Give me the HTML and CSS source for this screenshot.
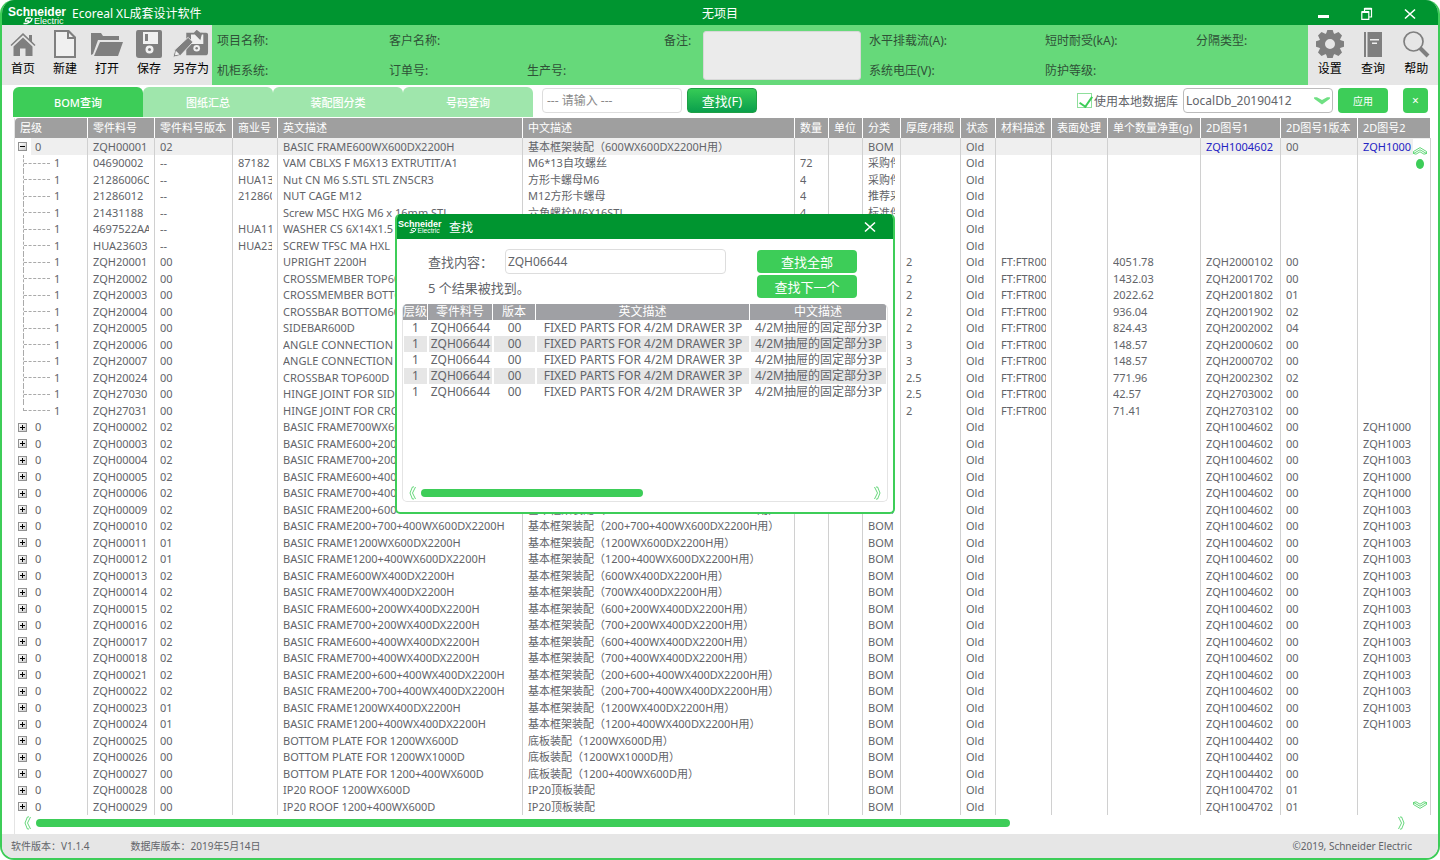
FILE: index.html
```html
<!DOCTYPE html>
<html lang="zh-CN">

<head>
    <meta charset="UTF-8">
    <meta name="viewport" content="width=device-width, initial-scale=1.0">
    <title>Ecoreal XL成套设计软件</title>
    <link rel="stylesheet" href="styles.css">
</head>

<body>

    <!-- shared arrows of the scroll bars -->
    <svg class="sprite" aria-hidden="true">
        <symbol id="arrow" viewBox="0 0 14 8">
            <path d="M.5 1.500 L3 .8 L7 3.200 L11 .8 L13.500 1.500 L7 5.200 Z M.5 1.500 V3.500 L7 7.400 L13.500 3.500 V1.500" />
        </symbol>
        <symbol id="arrow-side" viewBox="0 0 8 14">
            <path d="M3.400 1 L1 7 L3.400 13 M6.500 1 L3.500 7 L6.500 13 M3.400 1 L5 .8 M3.400 13 L5 13" />
        </symbol>
        <symbol id="logo" viewBox="0 0 60 20">
            <text x="0" y="10" class="logo_big">Schneider</text>
            <text x="26" y="18" class="logo_small">Electric</text>
            <path d="M23 12 h-4 q-2 1 -1.500 3 h3 q1 1 -1.500 2.500 h-3.500 M24 12 q0 4 -5 5.500" fill="none" stroke="#fff" stroke-width="1.300" />
        </symbol>
    </svg>

    <div class="window">
        <header class="titlebar">
            <div class="brand">
                <svg class="logo" role="img" aria-label="Schneider Electric"><use href="#logo" /></svg>
                <span>Ecoreal XL成套设计软件</span>
            </div>
            <span>无项目</span>
            <div class="win_buttons">
                <button type="button" aria-label="minimize"><svg width="12" height="14"><path d="M0 9.500h11" stroke-width="3" /></svg></button>
                <button type="button" aria-label="restore"><svg width="12" height="14"><path d="M.8 4.800h7v7.500h-7z M3.500 4.500v-3h7v8.500h-2.500" stroke-width="1.200" /><path d="M3.500 1.800h7M1 5h7" stroke-width="2" /></svg></button>
                <button type="button" aria-label="close"><svg width="12" height="14"><path d="M1 2.500l10 9M11 2.500l-10 9" stroke-width="1.600" /></svg></button>
            </div>
        </header>

        <div class="ribbon">
            <nav class="tools">
                <button type="button">
                    <svg viewBox="0 0 28 28"><path d="M14 3L1.500 15l1 1L14 5.200 25.500 16l1-1-3.500-3.400V5h-3v3.700z" /><path d="M14 7.500L4.500 16.500V26H11v-7.500h5.500V26h7v-9.500z" /></svg>
                    <span>首页</span>
                </button>
                <button type="button">
                    <svg viewBox="0 0 28 28"><path d="M3 0h15l7 7v21H3z" /><path class="hole" d="M5 2h11v7h7v17H5z" /><path class="hole" d="M18 3v4h4z" /></svg>
                    <span>新建</span>
                </button>
                <button type="button" class="wide">
                    <svg viewBox="0 0 32 28"><path d="M0 3h10l2 3h16v4H7L2 24 0 25z" /><path d="M9 12h23l-5 14H3z" /></svg>
                    <span>打开</span>
                </button>
                <button type="button">
                    <svg viewBox="0 0 28 28"><path d="M3 0h22q2 0 2 2v24q0 2-2 2H4q-3 0-3-3V3q0-3 2-3z" /><path class="hole" d="M8 2h15v12H8z" /><path d="M10 4h3v7h-3z" /><circle class="hole" cx="14.500" cy="19.500" r="4" /><circle cx="14.500" cy="19.500" r="1.500" /></svg>
                    <span>保存</span>
                </button>
                <button type="button" class="wide">
                    <svg viewBox="0 0 38 28"><path d="M14 2h8l3-3 4 3h6q2 0 2 2v19q0 3-3 3H14z" /><path class="hole" d="M19 4h4l6 6V4h3v10H19z" /><path d="M23 3l8-1-2 7z" /><circle class="hole" cx="25" cy="18.500" r="3.500" /><circle cx="25" cy="18.500" r="1.300" /><path d="M0 28l2-8L16 7l5 5L8 26z" stroke="#e6e6e6" /><path class="hole" d="M2 26l1-5 4 4z" /></svg>
                    <span>另存为</span>
                </button>
            </nav>

            <div class="fields">
                <span class="f1">项目名称:</span>
                <span class="f2">客户名称:</span>
                <label class="f4" for="remark">备注:</label>
                <textarea id="remark"></textarea>
                <span class="f6">水平排载流(A):</span>
                <span class="f7">短时耐受(kA):</span>
                <span class="f8">分隔类型:</span>
                <span class="f1 low">机柜系统:</span>
                <span class="f2 low">订单号:</span>
                <span class="f3 low">生产号:</span>
                <span class="f6 low">系统电压(V):</span>
                <span class="f7 low">防护等级:</span>
            </div>

            <nav class="tools side">
                <button type="button">
                    <svg viewBox="0 0 28 28"><g transform="translate(14 14)"><circle r="8" fill="none" stroke="#7f7f7f" stroke-width="6" /><path id="tooth" d="M-4-10l1.500-4.500h5L4-10z" /><use href="#tooth" transform="rotate(45)" /><use href="#tooth" transform="rotate(90)" /><use href="#tooth" transform="rotate(135)" /><use href="#tooth" transform="rotate(180)" /><use href="#tooth" transform="rotate(225)" /><use href="#tooth" transform="rotate(270)" /><use href="#tooth" transform="rotate(315)" /></g></svg>
                    <span>设置</span>
                </button>
                <button type="button">
                    <svg viewBox="0 0 28 28"><path d="M5 2h2v25H5zM8.500 2H23v25H8.500z" /><path class="hole" d="M11 9h9v1.500h-9zM13 12.500h5V14h-5z" /></svg>
                    <span>查询</span>
                </button>
                <button type="button">
                    <svg viewBox="0 0 28 28"><circle cx="11.500" cy="11.500" r="9.500" fill="none" stroke="#7f7f7f" stroke-width="1.700" /><path d="M18 18l8 8" fill="none" stroke="#7f7f7f" stroke-width="4" /></svg>
                    <span>帮助</span>
                </button>
            </nav>
        </div>

        <div class="bar">
            <div class="tabs">
                <button type="button" class="tab active">BOM查询</button>
                <button type="button" class="tab">图纸汇总</button>
                <button type="button" class="tab">装配图分类</button>
                <button type="button" class="tab">号码查询</button>
            </div>
            <input type="text" class="search" placeholder="--- 请输入 ---" aria-label="查找">
            <button type="button" class="find_button">查找(F)</button>
            <div class="database">
                <input type="checkbox" id="local" checked>
                <label for="local">使用本地数据库</label>
                <div class="select_box">
                    <select aria-label="数据库">
                        <option>LocalDb_20190412</option>
                    </select>
                    <svg viewBox="0 0 14 8"><path d="M0 1h2.500l4.500 2.500L11.500 1H14v1.500L7 7.500 0 2.500z" /></svg>
                </div>
                <button type="button" class="green apply">应用</button>
                <button type="button" class="green clear">×</button>
            </div>
        </div>

        <main class="grid">
            <table class="bom">
                <colgroup>
                    <col class="w73"><col class="w67"><col class="w78"><col class="w45"><col class="w245"><col class="w272">
                    <col class="w34"><col class="w34"><col class="w38"><col class="w60"><col class="w35"><col class="w56">
                    <col class="w56"><col class="w93"><col class="w80"><col class="w77"><col>
                </colgroup>
                <thead>
                    <tr>
                        <th>层级</th>
                        <th>零件料号</th>
                        <th>零件料号版本</th>
                        <th>商业号</th>
                        <th>英文描述</th>
                        <th>中文描述</th>
                        <th>数量</th>
                        <th>单位</th>
                        <th>分类</th>
                        <th>厚度/排规</th>
                        <th>状态</th>
                        <th>材料描述</th>
                        <th>表面处理</th>
                        <th>单个数量净重(g)</th>
                        <th>2D图号1</th>
                        <th>2D图号1版本</th>
                        <th>2D图号2</th>
                    </tr>
                </thead>
                <tbody id="rows"></tbody>
            </table>
            <div class="vscroll">
                <svg class="up"><use href="#arrow" /></svg>
                <div class="vthumb"></div>
                <svg class="down"><use href="#arrow" /></svg>
            </div>
            <div class="hscroll">
                <svg><use href="#arrow-side" /></svg>
                <div class="track"><div class="thumb"></div></div>
                <svg class="right"><use href="#arrow-side" /></svg>
            </div>
        </main>

        <footer class="status">
            <span>软件版本：V1.1.4</span>
            <span>数据库版本：2019年5月14日</span>
            <span class="copy">©2019, Schneider Electric</span>
        </footer>
    </div>

    <div class="dialog" role="dialog" aria-label="查找">
        <div class="dialog_title">
            <svg class="logo" aria-hidden="true" viewBox="0 0 60 20"><use href="#logo" /></svg>
            <span>查找</span>
            <button type="button" aria-label="close"><svg width="12" height="14"><path d="M1 2.500l10 9M11 2.500l-10 9" stroke-width="1.600" /></svg></button>
        </div>
        <div class="dialog_form">
            <div class="dialog_left">
                <div class="query">
                    <label for="query">查找内容：</label>
                    <input type="text" id="query" value="ZQH06644">
                </div>
                <p>5 个结果被找到。</p>
            </div>
            <div class="dialog_buttons">
                <button type="button" class="green">查找全部</button>
                <button type="button" class="green">查找下一个</button>
            </div>
        </div>
        <div class="results">
            <table>
                <colgroup><col class="w25"><col class="w65"><col class="w43"><col class="w214"><col></colgroup>
                <thead>
                    <tr><th>层级</th><th>零件料号</th><th>版本</th><th>英文描述</th><th>中文描述</th></tr>
                </thead>
                <tbody>
                    <tr><td>1</td><td>ZQH06644</td><td>00</td><td>FIXED PARTS FOR 4/2M DRAWER 3P</td><td>4/2M抽屉的固定部分3P</td></tr>
                    <tr><td>1</td><td>ZQH06644</td><td>00</td><td>FIXED PARTS FOR 4/2M DRAWER 3P</td><td>4/2M抽屉的固定部分3P</td></tr>
                    <tr><td>1</td><td>ZQH06644</td><td>00</td><td>FIXED PARTS FOR 4/2M DRAWER 3P</td><td>4/2M抽屉的固定部分3P</td></tr>
                    <tr><td>1</td><td>ZQH06644</td><td>00</td><td>FIXED PARTS FOR 4/2M DRAWER 3P</td><td>4/2M抽屉的固定部分3P</td></tr>
                    <tr><td>1</td><td>ZQH06644</td><td>00</td><td>FIXED PARTS FOR 4/2M DRAWER 3P</td><td>4/2M抽屉的固定部分3P</td></tr>
                </tbody>
            </table>
            <div class="hscroll">
                <svg><use href="#arrow-side" /></svg>
                <div class="track"><div class="thumb half"></div></div>
                <svg class="right"><use href="#arrow-side" /></svg>
            </div>
        </div>
    </div>

    <script src="main.js"></script>

</body>

</html>
```
FILE: styles.css
```css
* {
    box-sizing: border-box;
}

body {
    margin: 0;
    height: 100vh;
    position: relative;
    overflow: hidden;
    background: #fff;
    color: #626469;
    font-family: "Noto Sans", "Noto Sans CJK SC", sans-serif;
    font-size: 11px;
}

button,
input,
select,
textarea {
    font-family: inherit;
    color: inherit;
    margin: 0;
    padding: 0;
}

button {
    border: 0;
    background: none;
    cursor: pointer;
    white-space: nowrap;
}

.sprite {
    display: none;
}

.window {
    height: 100%;
    display: flex;
    flex-direction: column;
    border: 2px solid #3dcd58;
    border-top: 0;
    border-radius: 14px;
    overflow: hidden;
}

/* title bar */
.titlebar {
    flex: none;
    height: 25px;
    display: grid;
    grid-template-columns: 1fr auto 1fr;
    align-items: center;
    margin: 0 -2px;
    background: #009530;
    color: #fff;
    font-size: 12px;
    line-height: 27px;
}

.brand {
    display: flex;
    gap: 4px;
    padding-left: 8px;
}

.logo {
    width: 60px;
    height: 20px;
    fill: #fff;
    margin-top: 6px;
}

.logo_big {
    font: bold 12px "Liberation Sans", sans-serif;
}

.logo_small {
    font: 9px "Liberation Sans", sans-serif;
}

.win_buttons {
    display: flex;
    justify-content: flex-end;
    gap: 31px;
    padding-right: 24px;
}

.win_buttons svg,
.dialog_title button svg {
    display: block;
    fill: none;
    stroke: #fff;
}

/* ribbon */
.ribbon {
    flex: none;
    height: 60px;
    display: flex;
    background: #66d97a;
}

.tools {
    width: 210px;
    flex: none;
    display: flex;
    background: #e6e6e6;
}

.tools.side {
    width: 130px;
}

.tools button {
    flex: 1;
    display: flex;
    flex-direction: column;
    align-items: center;
    padding-top: 5px;
    color: #000;
    font-size: 12px;
    line-height: 22px;
}

.tools svg {
    width: 28px;
    height: 28px;
    flex: none;
    fill: #7f7f7f;
}

.tools .wide svg {
    width: 36px;
}

.tools .hole {
    fill: #f0f0f0;
}

.fields {
    flex: 1;
    display: grid;
    grid-template-columns: 172fr 138fr 137fr 39fr 166fr 176fr 151fr 112fr;
    grid-template-rows: 30px 30px;
    padding-left: 5px;
    color: #2f5137;
    font-size: 12px;
    line-height: 32px;
    white-space: nowrap;
}

.f1 { grid-column: 1; }
.f2 { grid-column: 2; }
.f3 { grid-column: 3; }
.f4 { grid-column: 4; }
.f6 { grid-column: 6; }
.f7 { grid-column: 7; }
.f8 { grid-column: 8; }

.fields > * {
    grid-row: 1;
}

.fields .low {
    grid-row: 2;
}

.fields textarea {
    grid-column: 5;
    grid-row: 1 / 3;
    margin: 6px 8px 5px 0;
    border: 1px solid #d8d8d8;
    border-radius: 3px;
    background: #ebebeb;
    resize: none;
}

/* tabs and search */
.bar {
    flex: none;
    height: 33px;
    display: flex;
    align-items: flex-start;
    padding: 3px 10px 0 11px;
}

.tabs {
    display: flex;
    margin: -1px 9px 0 0;
}

.tab {
    width: 130px;
    height: 30px;
    border-radius: 6px 6px 0 0;
    background: #9fe6ac;
    color: #fff;
    font-size: 11px;
    font-weight: 500;
}

.tab.active {
    background: #3dcd58;
}

.search {
    width: 140px;
    height: 25px;
    padding: 0 4px;
    border: 1px solid #ddd;
    border-radius: 4px;
    font-size: 12px;
}

.search::placeholder {
    color: #8a8a8a;
}

.find_button {
    width: 70px;
    height: 25px;
    margin-left: 5px;
    border: 1px solid #1f9f45;
    border-radius: 4px;
    background: linear-gradient(#36cb56, #0a9f4c);
    color: #fff;
    font-size: 13px;
}

.database {
    display: flex;
    align-items: center;
    margin-left: auto;
    font-size: 12px;
}

.database input {
    appearance: none;
    width: 15px;
    height: 15px;
    margin-right: 2px;
    border: 1px solid #8fdf9c;
    background: #fff;
}

.database input:checked::before {
    content: "";
    display: block;
    width: 6px;
    height: 11px;
    margin: 0 0 0 4px;
    border: solid #3dcd58;
    border-width: 0 2px 2px 0;
    transform: rotate(35deg);
}

.select_box {
    display: grid;
    align-items: center;
    margin-left: 5px;
}

.select_box select {
    grid-area: 1 / 1;
    appearance: none;
    width: 150px;
    height: 25px;
    padding-left: 2px;
    border: 1px solid #bbb;
    border-radius: 4px;
    background: #fff;
    font-size: 12px;
}

.select_box svg {
    grid-area: 1 / 1;
    justify-self: end;
    width: 16px;
    height: 9px;
    margin-right: 3px;
    fill: #6fe083;
    pointer-events: none;
}

.green {
    border-radius: 4px;
    background: #3dcd58;
    color: #fff;
}

.apply {
    width: 50px;
    height: 25px;
    margin-left: 5px;
    font-size: 10px;
}

.clear {
    width: 25px;
    height: 25px;
    margin-left: 15px;
    font-size: 12px;
}

/* parts table */
.grid {
    flex: 1;
    min-height: 0;
    display: flex;
    flex-direction: column;
    position: relative;
    margin: 0 7px 0 12px;
    border-left: 1px solid #e4e4e4;
    overflow: hidden;
}

table {
    width: 100%;
    table-layout: fixed;
    border-collapse: separate;
    border-spacing: 0;
}

.w73 { width: 73px; }
.w67 { width: 67px; }
.w78 { width: 78px; }
.w45 { width: 45px; }
.w245 { width: 245px; }
.w272 { width: 272px; }
.w34 { width: 34px; }
.w38 { width: 38px; }
.w60 { width: 60px; }
.w35 { width: 35px; }
.w56 { width: 56px; }
.w93 { width: 93px; }
.w80 { width: 80px; }
.w77 { width: 77px; }
.w25 { width: 25px; }
.w65 { width: 65px; }
.w43 { width: 43px; }
.w214 { width: 214px; }

th,
td {
    padding: 0;
    white-space: nowrap;
}

.bom th {
    height: 20px;
    padding-left: 5px;
    border-right: 1px solid #fff;
    background: #9f9f9f;
    color: #fff;
    font-weight: 400;
    line-height: 20px;
    text-align: left;
}

.bom th:first-child {
    border-top-left-radius: 4px;
}

.bom td {
    padding: 0 5px;
    border-right: 1px solid #d0d0d0;
}

.bom td:last-child {
    padding-right: 17px;
}

.bom .cell {
    display: flex;
    height: 16px;
    line-height: 16px;
    overflow: hidden;
}

/* rows take 33px in pairs */
.bom tr:nth-child(odd) .cell {
    height: 17px;
    line-height: 17px;
}

.bom td:first-child {
    padding: 0 0 0 3px;
}

.bom .current td {
    background: #efefef;
}

.bom .current td:first-child {
    background: linear-gradient(90deg, #fff 16px, #efefef 16px);
}

.bom a {
    color: #2424c4;
    text-decoration: none;
}

.toggle {
    width: 9px;
    height: 9px;
    margin: 4px 8px 0 0;
    flex: none;
    border: 1px solid #919191;
    background:
        linear-gradient(#000, #000) center / 5px 1px no-repeat,
        linear-gradient(#000, #000) center / 1px 5px no-repeat,
        linear-gradient(135deg, #fff, #ccc);
}

.toggle.open {
    background:
        linear-gradient(#000, #000) center / 5px 1px no-repeat,
        linear-gradient(135deg, #fff, #ccc);
}

.branch {
    display: flex;
    align-items: center;
    width: 27px;
    margin: 0 4px 0 5px;
    border-left: 1px dashed #aaa;
}

.branch::before {
    content: "";
    flex: 1;
    border-top: 1px dashed #aaa;
}

.branch.last {
    height: 9px;
    align-items: flex-end;
}

/* scroll bars */
.vscroll {
    position: absolute;
    top: 21px;
    right: 1px;
    bottom: 18px;
    width: 17px;
    display: flex;
    flex-direction: column;
    align-items: center;
    padding: 8px 3px 7px 0;
    background: #fff;
}

.vscroll svg {
    width: 14px;
    height: 8px;
}

.vscroll svg,
.hscroll svg {
    flex: none;
    fill: none;
    stroke: #3dcd58;
    stroke-width: .8;
}

.up {
    transform: rotate(180deg);
}

.vthumb {
    width: 8px;
    height: 10px;
    margin: 4px 0 auto;
    border-radius: 50%;
    background: #3dcd58;
}

.hscroll {
    display: flex;
    align-items: center;
    height: 16px;
    padding: 0 26px 0 9px;
}

.hscroll svg {
    width: 8px;
    height: 14px;
}

.hscroll .right {
    transform: rotate(180deg);
}

.track {
    flex: 1;
    padding: 0 8px 0 4px;
}

.thumb {
    width: 72%;
    height: 8px;
    border-radius: 4px;
    background: #3dcd58;
}

.thumb.half {
    width: 50%;
}

/* status bar */
.status {
    flex: none;
    display: flex;
    gap: 41px;
    height: 24px;
    padding: 0 26px 0 9px;
    background: #e6e6e6;
    font-size: 10px;
    line-height: 25px;
}

.copy {
    margin-left: auto;
}

/* search window */
.dialog {
    position: absolute;
    left: 395px;
    top: 214px;
    width: 500px;
    height: 300px;
    display: flex;
    flex-direction: column;
    border: 2px solid #3dcd58;
    border-top: 0;
    border-radius: 5px;
    background: #fff;
    overflow: hidden;
}

.dialog_title {
    flex: none;
    display: flex;
    align-items: center;
    height: 25px;
    margin: 0 -2px;
    padding: 0 19px 0 3px;
    background: #009530;
    color: #fff;
    font-size: 12px;
}

.dialog_title .logo {
    width: 45px;
    height: 16px;
    margin: 0 6px 0 0;
}

.dialog_title button {
    margin-left: auto;
}

.dialog_form {
    display: flex;
    justify-content: space-between;
    padding: 10px 36px 6px 31px;
    font-size: 13px;
}

.query {
    display: flex;
    align-items: center;
}

.query label {
    width: 77px;
}

.query input {
    width: 221px;
    height: 25px;
    padding: 0 2px;
    border: 1px solid #ddd;
    border-radius: 4px;
    font-size: 12px;
}

.dialog_left p {
    margin: 4px 0 0;
    line-height: 20px;
}

.dialog_buttons {
    display: flex;
    flex-direction: column;
    gap: 2px;
    padding-top: 1px;
}

.dialog_buttons button {
    width: 100px;
    height: 23px;
    font-size: 13px;
}

.results {
    flex: 1;
    display: flex;
    flex-direction: column;
    margin: 0 5px 10px;
    border: solid #e4e4e4;
    border-width: 0 1px 1px;
    border-radius: 5px;
    overflow: hidden;
    font-size: 12px;
    line-height: 16px;
    text-align: center;
}

.results th {
    height: 16px;
    border-right: 1px solid #fff;
    background: #9fa0a4;
    color: #fff;
    font-weight: 400;
}

.results td {
    height: 16px;
    border: solid #fff;
    border-width: 0 1px;
    overflow: hidden;
}

.results tr:nth-child(even) td {
    background: #e6e6e6;
}

.results .hscroll {
    margin-top: auto;
    padding: 0 6px;
}
```
FILE: main.js
```js
// 层级, 料号, 版本, 商业号, 英文, 中文, 数量, 单位, 分类, 厚度, 状态, 材料, 表面, 净重, 图号1, 图号1版本, 图号2
const rows = [
    [0, 'ZQH00001', '02', '', 'BASIC FRAME600WX600DX2200H', '基本框架装配（600WX600DX2200H用）', '', '', 'BOM', '', 'Old', '', '', '', 'ZQH1004602', '00', 'ZQH1000'],
    [1, '04690002', '--', '87182', 'VAM CBLXS F M6X13 EXTRUTIT/A1', 'M6*13自攻螺丝', '72', '', '采购件', '', 'Old'],
    [1, '21286006C', '--', 'HUA13', 'Nut CN M6 S.STL STL ZN5CR3', '方形卡螺母M6', '4', '', '采购件', '', 'Old'],
    [1, '21286012', '--', '212860', 'NUT CAGE M12', 'M12方形卡螺母', '4', '', '推荐采', '', 'Old'],
    [1, '21431188', '--', '', 'Screw MSC HXG M6 x 16mm STL', '六角螺栓M6X16STL', '4', '', '标准件', '', 'Old'],
    [1, '4697522AA', '--', 'HUA11', 'WASHER CS 6X14X1.5', '', '', '', '', '', 'Old'],
    [1, 'HUA23603', '--', 'HUA23', 'SCREW TFSC MA HXL', '', '', '', '', '', 'Old'],
    part('ZQH20001', '00', 'UPRIGHT 2200H', '2', '4051.78', 'ZQH2000102', '00'),
    part('ZQH20002', '00', 'CROSSMEMBER TOP600D', '2', '1432.03', 'ZQH2001702', '00'),
    part('ZQH20003', '00', 'CROSSMEMBER BOTTOM', '2', '2022.62', 'ZQH2001802', '01'),
    part('ZQH20004', '00', 'CROSSBAR BOTTOM600D', '2', '936.04', 'ZQH2001902', '02'),
    part('ZQH20005', '00', 'SIDEBAR600D', '2', '824.43', 'ZQH2002002', '04'),
    part('ZQH20006', '00', 'ANGLE CONNECTION', '3', '148.57', 'ZQH2000602', '00'),
    part('ZQH20007', '00', 'ANGLE CONNECTION', '3', '148.57', 'ZQH2000702', '00'),
    part('ZQH20024', '00', 'CROSSBAR TOP600D', '2.5', '771.96', 'ZQH2002302', '02'),
    part('ZQH27030', '00', 'HINGE JOINT FOR SIDE', '2.5', '42.57', 'ZQH2703002', '00'),
    part('ZQH27031', '00', 'HINGE JOINT FOR CROSS', '2', '71.41', 'ZQH2703102', '00'),
    frame('02', '02', '700WX600DX2200H', 'ZQH1000'),
    frame('03', '02', '600+200WX600DX2200H', 'ZQH1003'),
    frame('04', '02', '700+200WX600DX2200H', 'ZQH1003'),
    frame('05', '02', '600+400WX600DX2200H', 'ZQH1000'),
    frame('06', '02', '700+400WX600DX2200H', 'ZQH1000'),
    frame('09', '02', '200+600+400WX600DX2200H', 'ZQH1003'),
    frame('10', '02', '200+700+400WX600DX2200H', 'ZQH1003'),
    frame('11', '01', '1200WX600DX2200H', 'ZQH1003'),
    frame('12', '01', '1200+400WX600DX2200H', 'ZQH1003'),
    frame('13', '02', '600WX400DX2200H', 'ZQH1003'),
    frame('14', '02', '700WX400DX2200H', 'ZQH1003'),
    frame('15', '02', '600+200WX400DX2200H', 'ZQH1003'),
    frame('16', '02', '700+200WX400DX2200H', 'ZQH1003'),
    frame('17', '02', '600+400WX400DX2200H', 'ZQH1003'),
    frame('18', '02', '700+400WX400DX2200H', 'ZQH1003'),
    frame('21', '02', '200+600+400WX400DX2200H', 'ZQH1003'),
    frame('22', '02', '200+700+400WX400DX2200H', 'ZQH1003'),
    frame('23', '01', '1200WX400DX2200H', 'ZQH1003'),
    frame('24', '01', '1200+400WX400DX2200H', 'ZQH1003'),
    plate('25', 'BOTTOM PLATE FOR 1200WX600D', '底板装配（1200WX600D用）', 'ZQH1004402', '00'),
    plate('26', 'BOTTOM PLATE FOR 1200WX1000D', '底板装配（1200WX1000D用）', 'ZQH1004402', '00'),
    plate('27', 'BOTTOM PLATE FOR 1200+400WX600D', '底板装配（1200+400WX600D用）', 'ZQH1004402', '00'),
    plate('28', 'IP20 ROOF 1200WX600D', 'IP20顶板装配', 'ZQH1004702', '01'),
    plate('29', 'IP20 ROOF 1200+400WX600D', 'IP20顶板装配', 'ZQH1004702', '01'),
];

function part(no, ver, name, thick, weight, drawing, drawingVer) {
    return [1, no, ver, '', name, '', '', '', '', thick, 'Old', 'FT:FTR00', '', weight, drawing, drawingVer];
}

function frame(no, ver, size, drawing2) {
    return [0, 'ZQH000' + no, ver, '', 'BASIC FRAME' + size, `基本框架装配（${size}用）`, '', '', 'BOM', '', 'Old', '', '', '', 'ZQH1004602', '00', drawing2];
}

function plate(no, name, nameCn, drawing, drawingVer) {
    return [0, 'ZQH000' + no, '00', '', name, nameCn, '', '', 'BOM', '', 'Old', '', '', '', drawing, drawingVer];
}

let html = '';
rows.forEach((row, i) => {
    html += i === 0 ? '<tr class="current">' : '<tr>';
    for (let c = 0; c < 17; c++) {
        let text = row[c] === undefined ? '' : row[c];
        if (c === 0) {
            const last = rows[i + 1] && rows[i + 1][0] === 0 ? ' last' : '';
            text = (row[0] === 0
                ? `<span class="toggle${i === 0 ? ' open' : ''}"></span>`
                : `<span class="branch${last}"></span>`) + text;
        } else if (i === 0 && (c === 14 || c === 16)) {
            text = `<a href="#">${text}</a>`;
        }
        html += `<td><div class="cell">${text}</div></td>`;
    }
    html += '</tr>';
});
document.getElementById('rows').innerHTML = html;
```
